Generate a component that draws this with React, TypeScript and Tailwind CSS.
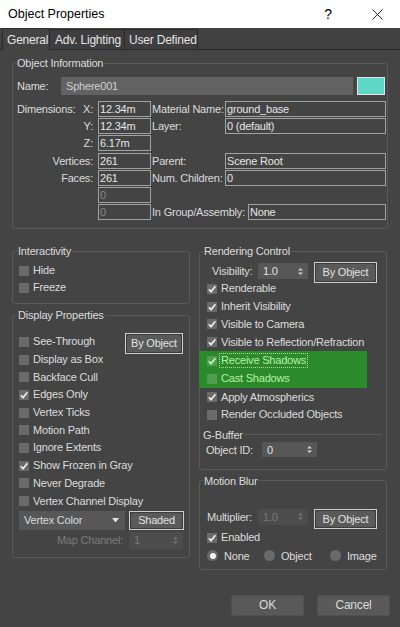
import React from 'react';

type CheckProps = {
  label: string;
  checked?: boolean;
  green?: boolean;
  focus?: boolean;
  row?: string;
};

const Tick = ({ color }: { color: string }) => (
  <svg width="10" height="10" viewBox="0 0 10 10">
    <path d="M1.8 5.2 L4 7.6 L8.4 2.2" fill="none" stroke={color} strokeWidth="1.7" />
  </svg>
);

function CheckBox({ label, checked, green, focus, row = 'h-[17.7px]' }: CheckProps) {
  return (
    <div className={`flex items-center ${row}`}>
      <div className={`shrink-0 w-[10px] h-[10px] flex items-center justify-center ${green ? 'bg-[#4f9e4f]' : 'bg-[#6a6a6a]'}`}>
        {checked && <Tick color={green ? '#c9f2bc' : '#ececec'} />}
      </div>
      <span
        className={`ml-[2px] px-[1px] leading-[13px] ${green ? 'text-[#b9f0a6]' : ''} ${
          focus ? 'border border-dotted border-[#a9dc98]' : 'border border-transparent'
        }`}
      >
        {label}
      </span>
    </div>
  );
}

const Arrows = ({ color }: { color: string }) => (
  <svg width="5" height="9" viewBox="0 0 5 9">
    <path d="M0 3.6 L2.5 1 L5 3.6Z M0 5.4 L2.5 8 L5 5.4Z" fill={color} />
  </svg>
);

function Spinner({ value, size, disabled }: { value: string; size: string; disabled?: boolean }) {
  return (
    <div
      className={`shrink-0 flex items-center justify-between pl-[5px] pr-[5px] ${size} ${
        disabled ? 'bg-[#4c4c4c] text-[#7b7b7b]' : 'bg-[#575757] text-[#e2e2e2]'
      }`}
    >
      <span className="leading-[14px]">{value}</span>
      <Arrows color={disabled ? '#777777' : '#cfcfcf'} />
    </div>
  );
}

function FocusButton({ label, size }: { label: string; size: string }) {
  return (
    <div className={`shrink-0 border border-[#cdcdcd] p-[1px] bg-[#3c3c3c] ${size}`}>
      <div className="w-full h-full rounded-[2px] bg-[#5a5a5a] text-[#e2e2e2] flex items-center justify-center">
        {label}
      </div>
    </div>
  );
}

function Field({ value, size, dim }: { value?: string; size: string; dim?: boolean }) {
  return (
    <div className={`shrink-0 h-[16px] border border-[#a2a2a2] pl-[1px] leading-[14px] ${dim ? 'text-[#8a8a8a]' : 'text-[#e6e6e6]'} ${size}`}>
      {value}
    </div>
  );
}

function Radio({ label, selected, size }: { label: string; selected?: boolean; size: string }) {
  return (
    <div className={`shrink-0 flex items-center gap-[6px] ${size}`}>
      <div className="w-[11px] h-[11px] rounded-full bg-[#6a6a6a] flex items-center justify-center">
        {selected && <div className="w-[6px] h-[6px] rounded-full bg-[#f2f2f2]" />}
      </div>
      <span>{label}</span>
    </div>
  );
}

export default function App() {
  return (
    <div className="w-[400px] min-h-[627px] bg-[#444444] text-[#dcdcdc] text-[11px] tracking-[-0.2px] whitespace-nowrap font-['Liberation_Sans',Arial,sans-serif]">
      {/* Title bar */}
      <div className="h-[28px] bg-white flex items-center text-black tracking-normal">
        <span className="pl-[8px] text-[12.5px]">Object Properties</span>
        <span className="ml-auto text-[14px] mr-[40px]">?</span>
        <svg width="11" height="11" viewBox="0 0 11 11" className="mr-[17px]">
          <path d="M0.5 0.5 L10.5 10.5 M10.5 0.5 L0.5 10.5" stroke="#222" strokeWidth="1" />
        </svg>
      </div>

      {/* Tabs */}
      <div className="h-[22px] flex items-end pl-[2px] bg-[#414141] border-b border-[#2a2a2a] text-[12px] text-[#e4e4e4]">
        <div className="shrink-0 w-[48px] h-[22px] -mb-px bg-[#444444] border border-b-0 border-[#2a2a2a] rounded-t-[2px] pl-[4px] flex items-center">
          General
        </div>
        <div className="shrink-0 w-[75px] h-[20px] bg-[#3e3e3e] border border-l-0 border-b-0 border-[#2a2a2a] rounded-t-[2px] pl-[5px] flex items-center">
          Adv. Lighting
        </div>
        <div className="shrink-0 w-[73px] h-[20px] bg-[#3e3e3e] border border-l-0 border-b-0 border-[#2a2a2a] rounded-t-[2px] pl-[4px] flex items-center">
          User Defined
        </div>
      </div>

      {/* Object Information */}
      <fieldset className="mx-[12px] mt-[6px] border border-[#5a5a5a] rounded-[3px]">
        <legend className="ml-[3px] px-[1px] leading-[14px]">Object Information</legend>
        <div className="pl-[4px] pt-[7px] pb-[8px]">
          <div className="flex items-center h-[18px]">
            <span className="shrink-0 w-[44px]">Name:</span>
            <div className="shrink-0 w-[292px] h-[18px] bg-[#626262] text-[#cfcfcf] pl-[5px] leading-[18px]">Sphere001</div>
            <div className="shrink-0 ml-[4px] w-[28px] h-[18px] border border-[#e4e4e4] bg-[#5dd8c7]" />
          </div>

          <div className="mt-[6px] flex flex-col gap-[1px]">
            <div className="flex items-center h-[16px]">
              <div className="shrink-0 w-[81px] pr-[5px] flex justify-between">
                <span>Dimensions:</span>
                <span>X:</span>
              </div>
              <Field value="12.34m" size="w-[53px]" />
              <span className="shrink-0 w-[74px] pl-[1px]">Material Name:</span>
              <Field value="ground_base" size="w-[161px]" />
            </div>
            <div className="flex items-center h-[16px]">
              <div className="shrink-0 w-[81px] pr-[5px] text-right">Y:</div>
              <Field value="12.34m" size="w-[53px]" />
              <span className="shrink-0 w-[74px] pl-[1px]">Layer:</span>
              <Field value="0 (default)" size="w-[161px]" />
            </div>
            <div className="flex items-center h-[16px]">
              <div className="shrink-0 w-[81px] pr-[5px] text-right">Z:</div>
              <Field value="6.17m" size="w-[53px]" />
            </div>
            <div className="flex items-center h-[16px] mt-[1px]">
              <div className="shrink-0 w-[81px] pr-[5px] text-right">Vertices:</div>
              <Field value="261" size="w-[53px]" />
              <span className="shrink-0 w-[74px] pl-[1px]">Parent:</span>
              <Field value="Scene Root" size="w-[161px]" />
            </div>
            <div className="flex items-center h-[16px]">
              <div className="shrink-0 w-[81px] pr-[5px] text-right">Faces:</div>
              <Field value="261" size="w-[53px]" />
              <span className="shrink-0 w-[74px] pl-[1px]">Num. Children:</span>
              <Field value="0" size="w-[161px]" />
            </div>
            <div className="flex items-center h-[16px]">
              <div className="shrink-0 w-[81px]" />
              <Field value="0" size="w-[53px]" dim />
            </div>
            <div className="flex items-center h-[16px]">
              <div className="shrink-0 w-[81px]" />
              <Field value="0" size="w-[53px]" dim />
              <span className="shrink-0 w-[97px] pl-[1px]">In Group/Assembly:</span>
              <Field value="None" size="w-[138px]" />
            </div>
          </div>
        </div>
      </fieldset>

      <div className="flex items-start gap-[9px] mx-[12px] mt-[15px]">
        {/* Left column */}
        <div className="shrink-0 w-[178px] flex flex-col">
          <fieldset className="border border-[#5a5a5a] rounded-[3px]">
            <legend className="ml-[4px] px-[1px] leading-[14px]">Interactivity</legend>
            <div className="pl-[6px] pt-[4px] pb-[7px]">
              <CheckBox label="Hide" row="h-[17px]" />
              <CheckBox label="Freeze" row="h-[17px]" />
            </div>
          </fieldset>

          <fieldset className="mt-[4px] border border-[#5a5a5a] rounded-[3px] min-w-0">
            <legend className="ml-[4px] px-[1px] leading-[14px]">Display Properties</legend>
            <div className="pl-[6px] pr-[6px] pt-[11px] pb-[8px]">
              <div className="flex items-start">
                <div className="flex flex-col flex-1 min-w-0">
                  <CheckBox label="See-Through" />
                  <CheckBox label="Display as Box" />
                  <CheckBox label="Backface Cull" />
                  <CheckBox label="Edges Only" checked />
                  <CheckBox label="Vertex Ticks" />
                  <CheckBox label="Motion Path" />
                  <CheckBox label="Ignore Extents" />
                  <CheckBox label="Show Frozen in Gray" checked />
                  <CheckBox label="Never Degrade" />
                  <CheckBox label="Vertex Channel Display" />
                </div>
                <FocusButton label="By Object" size="w-[58px] h-[21px]" />
              </div>
              <div className="flex items-center mt-[1px]">
                <div className="shrink-0 w-[106px] h-[19px] bg-[#575757] flex items-center justify-between pl-[5px] pr-[6px]">
                  <span>Vertex Color</span>
                  <svg width="7" height="5" viewBox="0 0 7 5">
                    <path d="M0 0 L7 0 L3.5 4.5Z" fill="#e0e0e0" />
                  </svg>
                </div>
                <FocusButton label="Shaded" size="ml-[4px] w-[55px] h-[19px]" />
              </div>
              <div className="flex items-center justify-end gap-[6px] mt-[2px] h-[17px]">
                <span className="text-[#7b7b7b]">Map Channel:</span>
                <Spinner value="1" size="w-[54px] h-[17px]" disabled />
              </div>
            </div>
          </fieldset>
        </div>

        {/* Right column */}
        <div className="shrink-0 w-[188px] flex flex-col">
          <fieldset className="border border-[#5a5a5a] rounded-[3px]">
            <legend className="ml-[3px] px-[1px] leading-[14px]">Rendering Control</legend>
            <div className="pl-[7px] pt-[4px] pb-[11px]">
              <div className="flex items-start h-[18px]">
                <span className="shrink-0 ml-[5px] w-[46px] mt-[1px] leading-[16px]">Visibility:</span>
                <Spinner value="1.0" size="w-[50px] h-[16px] mt-[1px]" />
                <FocusButton label="By Object" size="ml-[6px] w-[63px] h-[21px]" />
              </div>
              <CheckBox label="Renderable" checked row="h-[17.8px]" />
              <CheckBox label="Inherit Visibility" checked row="h-[17.8px]" />
              <CheckBox label="Visible to Camera" checked row="h-[17.8px]" />
              <CheckBox label="Visible to Reflection/Refraction" checked row="h-[17.8px]" />
              <div className="-ml-[8px] pl-[8px] w-[168px] bg-[#2b8b2b] py-[0.7px]">
                <CheckBox label="Receive Shadows" checked green focus row="h-[17.8px]" />
                <CheckBox label="Cast Shadows" green row="h-[17.8px]" />
              </div>
              <CheckBox label="Apply Atmospherics" checked row="h-[17.8px]" />
              <CheckBox label="Render Occluded Objects" row="h-[17.8px]" />
              <div className="flex items-center h-[14px] mt-[4px] -ml-[4px]">
                <span>G-Buffer</span>
                <div className="flex-1 h-px bg-[#5a5a5a] ml-[2px] mr-[4px]" />
              </div>
              <div className="flex items-center h-[16px]">
                <span className="shrink-0 w-[56px] -ml-[1px]">Object ID:</span>
                <Spinner value="0" size="w-[55px] h-[15px]" />
              </div>
            </div>
          </fieldset>

          <fieldset className="mt-[4px] border border-[#5a5a5a] rounded-[3px]">
            <legend className="ml-[3px] px-[1px] leading-[14px]">Motion Blur</legend>
            <div className="pl-[7px] pt-[21px] pb-[4px]">
              <div className="flex items-start h-[20px]">
                <span className="shrink-0 w-[51px] leading-[16px]">Multiplier:</span>
                <Spinner value="1.0" size="w-[50px] h-[16px]" disabled />
                <FocusButton label="By Object" size="ml-[6px] w-[63px] h-[20px]" />
              </div>
              <CheckBox label="Enabled" checked row="h-[18px]" />
              <div className="flex items-center h-[18px]">
                <Radio label="None" selected size="w-[57px]" />
                <Radio label="Object" size="w-[66px]" />
                <Radio label="Image" size="w-[50px]" />
              </div>
            </div>
          </fieldset>
        </div>
      </div>

      {/* Dialog buttons */}
      <div className="flex justify-end gap-[13px] pr-[10px] mt-[25px] text-[12px]">
        <div className="w-[73px] h-[21px] rounded-[2px] bg-[#595959] border border-[#505050] text-[#dadada] flex items-center justify-center">
          OK
        </div>
        <div className="w-[73px] h-[21px] rounded-[2px] bg-[#595959] border border-[#505050] text-[#dadada] flex items-center justify-center">
          Cancel
        </div>
      </div>
    </div>
  );
}
